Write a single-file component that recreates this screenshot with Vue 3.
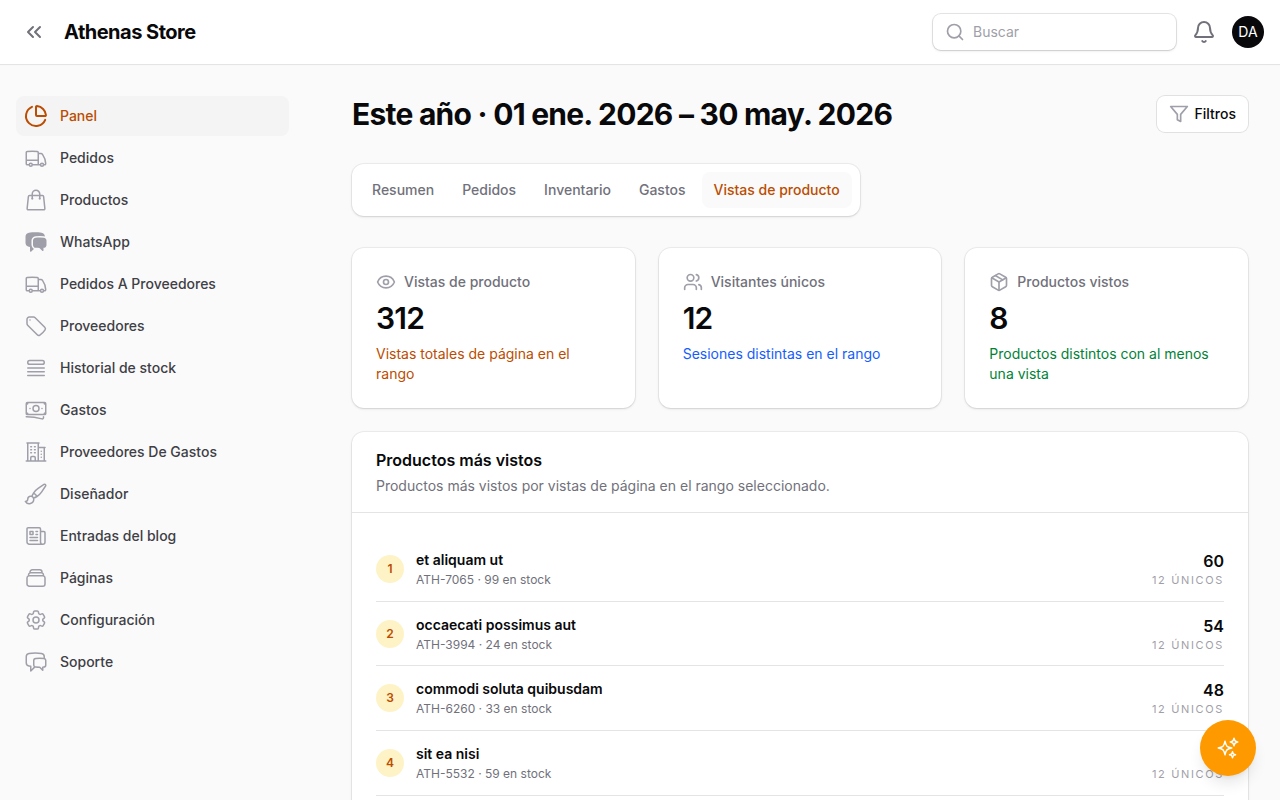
<script setup>
  import { ref } from 'vue'

  const active = ref('Panel')
  const activeTab = ref('Vistas de producto')
  const search = ref('')

  const icons = {
    pie: ['M21 12c.552 0 1.005-.449.95-.998a10 10 0 0 0-8.953-8.951c-.55-.055-.998.398-.998.95v8a1 1 0 0 0 1 1z', 'M21.21 15.89A10 10 0 1 1 8 2.83'],
    truck: ['M8.25 18.75a1.5 1.5 0 0 1-3 0m3 0a1.5 1.5 0 0 0-3 0m3 0h6m-9 0H3.375a1.125 1.125 0 0 1-1.125-1.125V14.25m17.25 4.5a1.5 1.5 0 0 1-3 0m3 0a1.5 1.5 0 0 0-3 0m3 0h1.125c.621 0 1.129-.504 1.09-1.124a17.902 17.902 0 0 0-3.213-9.193 2.056 2.056 0 0 0-1.58-.86H14.25M16.5 18.75h-2.25m0-11.177v-.958c0-.568-.422-1.048-.987-1.106a48.554 48.554 0 0 0-10.026 0 1.106 1.106 0 0 0-.987 1.106v7.635m12-6.677v6.677m0 4.5v-4.5m0 0h-12'],
    bag: ['M15.75 10.5V6a3.75 3.75 0 1 0-7.5 0v4.5m11.356-1.993 1.263 12c.07.665-.45 1.243-1.119 1.243H4.25a1.125 1.125 0 0 1-1.12-1.243l1.264-12A1.125 1.125 0 0 1 5.513 7.5h12.974c.576 0 1.059.435 1.119 1.007ZM8.625 10.5a.375.375 0 1 1-.75 0 .375.375 0 0 1 .75 0Zm7.5 0a.375.375 0 1 1-.75 0 .375.375 0 0 1 .75 0Z'],
    chatSolid: ['M4.913 2.658c2.075-.27 4.19-.408 6.337-.408 2.147 0 4.262.139 6.337.408 1.922.25 3.291 1.861 3.405 3.727a4.403 4.403 0 0 0-1.032-.211 50.89 50.89 0 0 0-8.42 0c-2.358.196-4.04 2.19-4.04 4.434v4.286a4.47 4.47 0 0 0 2.433 3.984L7.28 21.53A.75.75 0 0 1 6 21v-4.03a48.527 48.527 0 0 1-1.087-.128C2.905 16.58 1.5 14.833 1.5 12.862V6.638c0-1.97 1.405-3.718 3.413-3.979Z', 'M15.75 7.5c-1.376 0-2.739.057-4.086.169C10.124 7.797 9 9.103 9 10.609v4.285c0 1.507 1.128 2.814 2.67 2.94 1.243.102 2.5.157 3.768.165l2.782 2.781a.75.75 0 0 0 1.28-.53v-2.39l.33-.026c1.542-.125 2.67-1.433 2.67-2.94v-4.286c0-1.505-1.125-2.811-2.664-2.94A49.392 49.392 0 0 0 15.75 7.5Z'],
    tag: ['M9.568 3H5.25A2.25 2.25 0 0 0 3 5.25v4.318c0 .597.237 1.17.659 1.591l9.581 9.581c.699.699 1.78.872 2.607.33a18.095 18.095 0 0 0 5.223-5.223c.542-.827.369-1.908-.33-2.607L11.16 3.66A2.25 2.25 0 0 0 9.568 3Z', 'M6 6h.008v.008H6V6Z'],
    list: ['M3.75 12h16.5m-16.5 3.75h16.5M3.75 19.5h16.5M5.625 4.5h12.75a1.875 1.875 0 0 1 0 3.75H5.625a1.875 1.875 0 0 1 0-3.75Z'],
    cash: ['M2.25 18.75a60.07 60.07 0 0 1 15.797 2.101c.727.198 1.453-.342 1.453-1.096V18.75M3.75 4.5v.75A.75.75 0 0 1 3 6h-.75m0 0v-.375c0-.621.504-1.125 1.125-1.125H20.25M2.25 6v9m18-10.5v.75c0 .414.336.75.75.75h.75m-1.5-1.5h.375c.621 0 1.125.504 1.125 1.125v9.75c0 .621-.504 1.125-1.125 1.125h-.375m1.5-1.5H21a.75.75 0 0 0-.75.75v.75m0 0H3.75m0 0h-.375a1.125 1.125 0 0 1-1.125-1.125V15m1.5 1.5v-.75A.75.75 0 0 0 3 15h-.75M15 10.5a3 3 0 1 1-6 0 3 3 0 0 1 6 0Zm3 0h.008v.008H18V10.5Zm-12 0h.008v.008H6V10.5Z'],
    building: ['M2.25 21h19.5m-18-18v18m10.5-18v18m6-13.5V21M6.75 6.75h.75m-.75 3h.75m-.75 3h.75m3-6h.75m-.75 3h.75m-.75 3h.75M6.75 21v-3.375c0-.621.504-1.125 1.125-1.125h2.25c.621 0 1.125.504 1.125 1.125V21M3 3h12m-.75 4.5H21m-3.75 3.75h.008v.008h-.008v-.008Zm0 3h.008v.008h-.008v-.008Zm0 3h.008v.008h-.008v-.008Z'],
    brush: ['M9.53 16.122a3 3 0 0 0-5.78 1.128 2.25 2.25 0 0 1-2.4 2.245 4.5 4.5 0 0 0 8.4-2.245c0-.399-.078-.78-.22-1.128Zm0 0a15.998 15.998 0 0 0 3.388-1.62m-5.043-.025a15.994 15.994 0 0 1 1.622-3.395m3.42 3.42a15.995 15.995 0 0 0 4.764-4.648l3.876-5.814a1.151 1.151 0 0 0-1.597-1.597L14.146 6.32a15.996 15.996 0 0 0-4.649 4.763m3.42 3.42a6.776 6.776 0 0 0-3.42-3.42'],
    news: ['M12 7.5h1.5m-1.5 3h1.5m-7.5 3h7.5m-7.5 3h7.5m3-9h3.375c.621 0 1.125.504 1.125 1.125V18a2.25 2.25 0 0 1-2.25 2.25M16.5 7.5V18a2.25 2.25 0 0 0 2.25 2.25M16.5 7.5V4.875c0-.621-.504-1.125-1.125-1.125H4.125C3.504 3.75 3 4.254 3 4.875V18a2.25 2.25 0 0 0 2.25 2.25h13.5M6 7.5h3v3H6v-3Z'],
    stack: ['M6 6.878V6a2.25 2.25 0 0 1 2.25-2.25h7.5A2.25 2.25 0 0 1 18 6v.878m-12 0c.235-.083.487-.128.75-.128h10.5c.263 0 .515.045.75.128m-12 0A2.25 2.25 0 0 0 4.5 9v.878m13.5-3A2.25 2.25 0 0 1 19.5 9v.878m0 0a2.246 2.246 0 0 0-.75-.128H5.25c-.263 0-.515.045-.75.128m15 0A2.25 2.25 0 0 1 21 12v6a2.25 2.25 0 0 1-2.25 2.25H5.25A2.25 2.25 0 0 1 3 18v-6c0-.98.626-1.813 1.5-2.122'],
    cog: ['M9.594 3.94c.09-.542.56-.94 1.11-.94h2.593c.55 0 1.02.398 1.11.94l.213 1.281c.063.374.313.686.645.87.074.04.147.083.22.127.325.196.72.257 1.075.124l1.217-.456a1.125 1.125 0 0 1 1.37.49l1.296 2.247a1.125 1.125 0 0 1-.26 1.431l-1.003.827c-.293.241-.438.613-.43.992a7.723 7.723 0 0 1 0 .255c-.008.378.137.75.43.991l1.004.827c.424.35.534.955.26 1.43l-1.298 2.247a1.125 1.125 0 0 1-1.369.491l-1.217-.456c-.355-.133-.75-.072-1.076.124a6.47 6.47 0 0 1-.22.128c-.331.183-.581.495-.644.869l-.213 1.281c-.09.543-.56.94-1.11.94h-2.594c-.55 0-1.019-.398-1.11-.94l-.213-1.281c-.062-.374-.312-.686-.644-.87a6.52 6.52 0 0 1-.22-.127c-.325-.196-.72-.257-1.076-.124l-1.217.456a1.125 1.125 0 0 1-1.369-.49l-1.297-2.247a1.125 1.125 0 0 1 .26-1.431l1.004-.827c.292-.24.437-.613.43-.991a6.932 6.932 0 0 1 0-.255c.007-.38-.138-.751-.43-.992l-1.004-.827a1.125 1.125 0 0 1-.26-1.43l1.297-2.247a1.125 1.125 0 0 1 1.37-.491l1.216.456c.356.133.751.072 1.076-.124.072-.044.146-.086.22-.128.332-.183.582-.495.644-.869l.214-1.28Z', 'M15 12a3 3 0 1 1-6 0 3 3 0 0 1 6 0Z'],
    chat: ['M20.25 8.511c.884.284 1.5 1.128 1.5 2.097v4.286c0 1.136-.847 2.1-1.98 2.193-.34.027-.68.052-1.02.072v3.091l-3-3c-1.354 0-2.694-.055-4.02-.163a2.115 2.115 0 0 1-.825-.242m9.345-8.334a2.126 2.126 0 0 0-.476-.095 48.64 48.64 0 0 0-8.048 0c-1.131.094-1.976 1.057-1.976 2.192v4.286c0 .837.46 1.58 1.155 1.951m9.345-8.334V6.637c0-1.621-1.152-3.026-2.76-3.235A48.455 48.455 0 0 0 11.25 3c-2.115 0-4.198.137-6.24.402-1.608.209-2.76 1.614-2.76 3.235v6.226c0 1.621 1.152 3.026 2.76 3.235.577.075 1.157.14 1.74.194V21l4.155-4.155'],
    eye: ['M2.062 12.348a1 1 0 0 1 0-.696 10.75 10.75 0 0 1 19.876 0 1 1 0 0 1 0 .696 10.75 10.75 0 0 1-19.876 0', 'M15 12a3 3 0 1 1-6 0 3 3 0 0 1 6 0Z'],
    users: ['M16 21v-2a4 4 0 0 0-4-4H6a4 4 0 0 0-4 4v2', 'M16 3.128a4 4 0 0 1 0 7.744', 'M22 21v-2a4 4 0 0 0-3-3.87', 'M13 7a4 4 0 1 1-8 0 4 4 0 0 1 8 0Z'],
    box: ['M11 21.73a2 2 0 0 0 2 0l7-4A2 2 0 0 0 21 16V8a2 2 0 0 0-1-1.73l-7-4a2 2 0 0 0-2 0l-7 4A2 2 0 0 0 3 8v8a2 2 0 0 0 1 1.73z', 'M12 22V12', 'M3.29 7 12 12l8.71-5', 'm7.5 4.27 9 5.15']
  }

  const nav = [
    { label: 'Panel', icon: 'pie' },
    { label: 'Pedidos', icon: 'truck' },
    { label: 'Productos', icon: 'bag' },
    { label: 'WhatsApp', icon: 'chatSolid', solid: true },
    { label: 'Pedidos A Proveedores', icon: 'truck' },
    { label: 'Proveedores', icon: 'tag' },
    { label: 'Historial de stock', icon: 'list' },
    { label: 'Gastos', icon: 'cash' },
    { label: 'Proveedores De Gastos', icon: 'building' },
    { label: 'Diseñador', icon: 'brush' },
    { label: 'Entradas del blog', icon: 'news' },
    { label: 'Páginas', icon: 'stack' },
    { label: 'Configuración', icon: 'cog' },
    { label: 'Soporte', icon: 'chat' }
  ]

  const tabs = ['Resumen', 'Pedidos', 'Inventario', 'Gastos', 'Vistas de producto']

  const stats = [
    { label: 'Vistas de producto', value: 312, text: 'Vistas totales de página en el rango', icon: 'eye', tone: 'amber' },
    { label: 'Visitantes únicos', value: 12, text: 'Sesiones distintas en el rango', icon: 'users', tone: 'blue' },
    { label: 'Productos vistos', value: 8, text: 'Productos distintos con al menos una vista', icon: 'box', tone: 'green' }
  ]

  const products = [
    { name: 'et aliquam ut', sku: 'ATH-7065', stock: 99, views: 60, unique: 12 },
    { name: 'occaecati possimus aut', sku: 'ATH-3994', stock: 24, views: 54, unique: 12 },
    { name: 'commodi soluta quibusdam', sku: 'ATH-6260', stock: 33, views: 48, unique: 12 },
    { name: 'sit ea nisi', sku: 'ATH-5532', stock: 59, views: 42, unique: 12 }
  ]
</script>

<template>
  <div class="layout">
    <header class="topbar">
      <button class="iconBtn">
        <svg class="icon" viewBox="0 0 24 24"><path d="m11 17-5-5 5-5" /><path d="m18 17-5-5 5-5" /></svg>
      </button>
      <div class="brand">Athenas Store</div>
      <label class="search">
        <svg class="icon small" viewBox="0 0 24 24"><circle cx="11" cy="11" r="8" /><path d="m21 21-4.3-4.3" /></svg>
        <input v-model="search" type="text" placeholder="Buscar">
      </label>
      <button class="iconBtn bell">
        <svg class="icon" viewBox="0 0 24 24">
          <path d="M10.268 21a2 2 0 0 0 3.464 0" />
          <path d="M3.262 15.326A1 1 0 0 0 4 17h16a1 1 0 0 0 .74-1.673C19.41 13.956 18 12.499 18 8A6 6 0 0 0 6 8c0 4.499-1.411 5.956-2.738 7.326" />
        </svg>
      </button>
      <div class="avatar">DA</div>
    </header>

    <div class="body">
      <nav class="sidebar">
        <a
          v-for="item in nav"
          :key="item.label"
          class="navItem"
          :class="{ active: item.label === active }"
          @click="active = item.label"
        >
          <svg class="icon" :class="{ solid: item.solid, bold: item.icon === 'pie' }" viewBox="0 0 24 24">
            <path v-for="d in icons[item.icon]" :key="d" :d="d" />
          </svg>
          <span>{{ item.label }}</span>
        </a>
      </nav>

      <main class="main">
        <div class="pageHead">
          <h1>Este año · 01 ene. 2026 – 30 may. 2026</h1>
          <button class="filterBtn">
            <svg class="icon small" viewBox="0 0 24 24"><polygon points="22 3 2 3 10 12.46 10 19 14 21 14 12.46 22 3" /></svg>
            Filtros
          </button>
        </div>

        <div class="tabs">
          <button
            v-for="tab in tabs"
            :key="tab"
            class="tab"
            :class="{ active: tab === activeTab }"
            @click="activeTab = tab"
          >{{ tab }}</button>
        </div>

        <div class="stats">
          <div v-for="stat in stats" :key="stat.label" class="card stat">
            <div class="statLabel">
              <svg class="icon small" viewBox="0 0 24 24">
                <path v-for="d in icons[stat.icon]" :key="d" :d="d" />
              </svg>
              <span>{{ stat.label }}</span>
            </div>
            <div class="statValue">{{ stat.value }}</div>
            <div class="statText" :class="stat.tone">{{ stat.text }}</div>
          </div>
        </div>

        <section class="card">
          <div class="sectionHead">
            <h2>Productos más vistos</h2>
            <p>Productos más vistos por vistas de página en el rango seleccionado.</p>
          </div>
          <ul class="products">
            <li v-for="(product, i) in products" :key="product.sku">
              <span class="rank">{{ i + 1 }}</span>
              <div class="info">
                <div class="name">{{ product.name }}</div>
                <div class="sku">{{ product.sku }} · {{ product.stock }} en stock</div>
              </div>
              <div class="count">
                <div class="views">{{ product.views }}</div>
                <div class="unique">{{ product.unique }} únicos</div>
              </div>
            </li>
          </ul>
        </section>
      </main>
    </div>

    <button class="fab">
      <svg class="icon" viewBox="0 0 24 24">
        <path d="M9.813 15.904 9 18.75l-.813-2.846a4.5 4.5 0 0 0-3.09-3.09L2.25 12l2.846-.813a4.5 4.5 0 0 0 3.09-3.09L9 5.25l.813 2.846a4.5 4.5 0 0 0 3.09 3.09L15.75 12l-2.846.813a4.5 4.5 0 0 0-3.09 3.09ZM18.259 8.715 18 9.75l-.259-1.035a3.375 3.375 0 0 0-2.455-2.456L14.25 6l1.036-.259a3.375 3.375 0 0 0 2.455-2.456L18 2.25l.259 1.035a3.375 3.375 0 0 0 2.456 2.456L21.75 6l-1.035.259a3.375 3.375 0 0 0-2.456 2.456ZM16.894 20.567 16.5 21.75l-.394-1.183a2.25 2.25 0 0 0-1.423-1.423L13.5 18.75l1.183-.394a2.25 2.25 0 0 0 1.423-1.423l.394-1.183.394 1.183a2.25 2.25 0 0 0 1.423 1.423l1.183.394-1.183.394a2.25 2.25 0 0 0-1.423 1.423Z" />
      </svg>
    </button>
  </div>
</template>

<style>
  body {
    margin: 0;
    background-color: #fafafa;
  }
</style>

<style scoped>
  .layout {
    display: flex;
    flex-direction: column;
    height: 100vh;
    overflow: hidden;
    box-sizing: border-box;
    color: #09090b;
    background-color: #fafafa;
    font-family: Inter, "Liberation Sans", sans-serif;
    font-size: 14px;
    line-height: 20px;
  }
  button {
    border: none;
    background: none;
    padding: 0;
    font: inherit;
    color: inherit;
    cursor: pointer;
  }
  h1, h2, p, ul {
    margin: 0;
    padding: 0;
  }
  .icon {
    display: block;
    flex-shrink: 0;
    width: 24px;
    height: 24px;
    fill: none;
    stroke: currentColor;
    stroke-width: 1.5;
    stroke-linecap: round;
    stroke-linejoin: round;
  }
  .icon.small {
    width: 20px;
    height: 20px;
    stroke-width: 2;
    color: #9f9fa9;
  }
  .icon.bold {
    stroke-width: 2;
  }
  .icon.solid {
    fill: currentColor;
    stroke: none;
  }

  .topbar {
    display: flex;
    align-items: center;
    flex-shrink: 0;
    height: 64px;
    padding: 0 16px 0 22px;
    background-color: #fff;
    box-shadow: 0 1px 0 #e4e4e7, 0 1px 2px rgba(0, 0, 0, 0.03);
  }
  .iconBtn {
    color: #71717b;
  }
  .iconBtn .icon {
    stroke-width: 2;
  }
  .brand {
    margin-left: 18px;
    margin-right: auto;
    font-size: 20px;
    line-height: 28px;
    font-weight: 700;
    letter-spacing: -0.5px;
  }
  .search {
    display: flex;
    align-items: center;
    gap: 8px;
    width: 243px;
    height: 36px;
    padding: 0 12px;
    box-sizing: border-box;
    border-radius: 8px;
    background-color: #fff;
    box-shadow: 0 0 0 1px rgba(9, 9, 11, 0.1), 0 1px 3px rgba(0, 0, 0, 0.1), 0 1px 2px -1px rgba(0, 0, 0, 0.1);
  }
  .search input {
    width: 100%;
    padding: 0;
    border: none;
    outline: none;
    font: inherit;
    background: none;
  }
  .search input::placeholder {
    color: #9f9fa9;
  }
  .bell {
    margin: 0 16px;
  }
  .avatar {
    width: 32px;
    height: 32px;
    border-radius: 50%;
    background-color: #09090b;
    color: #fff;
    line-height: 32px;
    text-align: center;
  }

  .body {
    display: flex;
    flex: 1;
    min-height: 0;
  }
  .sidebar {
    display: flex;
    flex-direction: column;
    gap: 2px;
    flex-shrink: 0;
    width: 273px;
    padding: 32px 31px 0 16px;
  }
  .navItem {
    display: flex;
    align-items: center;
    gap: 12px;
    height: 40px;
    padding: 0 8px;
    border-radius: 8px;
    color: #3f3f46;
    font-weight: 500;
    cursor: pointer;
  }
  .navItem .icon {
    color: #9f9fa9;
  }
  .navItem.active {
    background-color: #f4f4f5;
  }
  .navItem.active,
  .navItem.active .icon {
    color: #bb4d00;
  }

  .main {
    display: flex;
    flex-direction: column;
    flex: 1;
    min-width: 0;
    padding: 32px 32px 0;
  }
  .pageHead {
    display: flex;
    align-items: center;
    justify-content: space-between;
    height: 36px;
  }
  h1 {
    font-size: 30px;
    line-height: 36px;
    font-weight: 700;
    letter-spacing: -0.75px;
  }
  .filterBtn {
    display: flex;
    align-items: center;
    gap: 6px;
    height: 36px;
    padding: 0 12px;
    border-radius: 8px;
    background-color: #fff;
    box-shadow: 0 0 0 1px rgba(9, 9, 11, 0.1);
    font-weight: 500;
  }

  .tabs,
  .card {
    border-radius: 12px;
    background-color: #fff;
    box-shadow: 0 0 0 1px rgba(9, 9, 11, 0.05), 0 1px 3px rgba(0, 0, 0, 0.1), 0 1px 2px -1px rgba(0, 0, 0, 0.1);
  }
  .tabs {
    display: flex;
    align-self: flex-start;
    gap: 4px;
    margin-top: 32px;
    padding: 8px;
  }
  .tab {
    height: 36px;
    padding: 0 12px;
    border-radius: 8px;
    font-weight: 500;
    color: #71717b;
  }
  .tab.active {
    background-color: #fafafa;
    color: #bb4d00;
  }

  .stats {
    display: grid;
    grid-template-columns: repeat(3, minmax(0, 1fr));
    gap: 24px;
    margin: 32px 0 24px;
  }
  .stat {
    display: flex;
    flex-direction: column;
    gap: 8px;
    padding: 24px;
  }
  .statLabel {
    display: flex;
    align-items: center;
    gap: 8px;
    font-weight: 500;
    color: #71717b;
  }
  .statValue {
    font-size: 30px;
    line-height: 36px;
    font-weight: 600;
    letter-spacing: -0.75px;
  }
  .amber {
    color: #bb4d00;
  }
  .blue {
    color: #155dfc;
  }
  .green {
    color: #008236;
  }

  .sectionHead {
    padding: 16px 24px;
    border-bottom: 1px solid #e4e4e7;
  }
  h2 {
    font-size: 16px;
    line-height: 24px;
    font-weight: 600;
  }
  .sectionHead p {
    margin-top: 4px;
    color: #71717b;
  }
  .products {
    padding: 24px;
    list-style: none;
  }
  .products li {
    display: flex;
    align-items: center;
    gap: 12px;
    padding: 12px 0;
    border-bottom: 1px solid #e4e4e7;
  }
  .rank {
    width: 28px;
    height: 28px;
    border-radius: 50%;
    background-color: #fef3c6;
    color: #bb4d00;
    font-size: 12px;
    line-height: 28px;
    font-weight: 600;
    text-align: center;
  }
  .info {
    flex: 1;
  }
  .name {
    font-weight: 600;
  }
  .sku {
    margin-top: 2px;
    font-size: 12px;
    line-height: 16px;
    color: #71717b;
  }
  .count {
    text-align: right;
  }
  .views {
    font-size: 16px;
    line-height: 24px;
    font-weight: 600;
  }
  .unique {
    font-size: 11px;
    line-height: calc(20 / 14);
    letter-spacing: 0.15em;
    text-transform: uppercase;
    color: #9f9fa9;
  }

  .fab {
    position: fixed;
    right: 24px;
    bottom: 24px;
    display: flex;
    align-items: center;
    justify-content: center;
    width: 56px;
    height: 56px;
    border-radius: 50%;
    background-color: #fe9a00;
    color: #fff;
    box-shadow: 0 10px 15px -3px rgba(0, 0, 0, 0.1), 0 4px 6px -4px rgba(0, 0, 0, 0.1);
  }
</style>
